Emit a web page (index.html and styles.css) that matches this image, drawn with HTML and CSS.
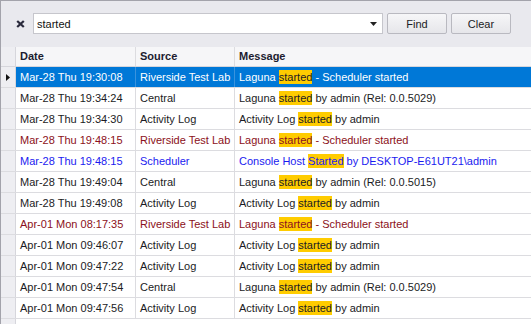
FILE: index.html
```html
<!DOCTYPE html>
<html>
<head>
<meta charset="utf-8">
<link rel="stylesheet" href="styles.css">
</head>
<body>
<div class="app">
  <div class="toolbar">
    <span class="clear-x">
      <svg width="9" height="8" viewBox="0 0 9 8"><path d="M1.2 1 L7.8 7 M7.8 1 L1.2 7" stroke="#2a2a3c" stroke-width="2.3" stroke-linecap="butt"/></svg>
    </span>
    <div class="search">
      <span class="search-text">started</span>
      <svg class="drop" width="7" height="4" viewBox="0 0 7 4"><path d="M0 0 H7 L3.5 4 Z" fill="#222"/></svg>
    </div>
    <button class="btn">Find</button>
    <button class="btn">Clear</button>
  </div>
  <div class="grid">
    <div class="row head">
      <div class="ind"></div>
      <div class="cell c-date">Date</div>
      <div class="cell c-src">Source</div>
      <div class="cell c-msg">Message</div>
    </div>
    <div class="row sel">
      <div class="ind"><svg width="4" height="7" viewBox="0 0 4 7"><path d="M0 0 L4 3.5 L0 7 Z" fill="#111"/></svg></div>
      <div class="cell c-date">Mar-28 Thu 19:30:08</div>
      <div class="cell c-src">Riverside Test Lab</div>
      <div class="cell c-msg">Laguna <span class="hl">started</span> - Scheduler started</div>
    </div>
    <div class="row">
      <div class="ind"></div>
      <div class="cell c-date">Mar-28 Thu 19:34:24</div>
      <div class="cell c-src">Central</div>
      <div class="cell c-msg">Laguna <span class="hl">started</span> by admin (Rel: 0.0.5029)</div>
    </div>
    <div class="row">
      <div class="ind"></div>
      <div class="cell c-date">Mar-28 Thu 19:34:30</div>
      <div class="cell c-src">Activity Log</div>
      <div class="cell c-msg">Activity Log <span class="hl">started</span> by admin</div>
    </div>
    <div class="row red">
      <div class="ind"></div>
      <div class="cell c-date">Mar-28 Thu 19:48:15</div>
      <div class="cell c-src">Riverside Test Lab</div>
      <div class="cell c-msg">Laguna <span class="hl">started</span> - Scheduler started</div>
    </div>
    <div class="row blue">
      <div class="ind"></div>
      <div class="cell c-date">Mar-28 Thu 19:48:15</div>
      <div class="cell c-src">Scheduler</div>
      <div class="cell c-msg">Console Host <span class="hl">Started</span> by DESKTOP-E61UT21\admin</div>
    </div>
    <div class="row">
      <div class="ind"></div>
      <div class="cell c-date">Mar-28 Thu 19:49:04</div>
      <div class="cell c-src">Central</div>
      <div class="cell c-msg">Laguna <span class="hl">started</span> by admin (Rel: 0.0.5015)</div>
    </div>
    <div class="row">
      <div class="ind"></div>
      <div class="cell c-date">Mar-28 Thu 19:49:08</div>
      <div class="cell c-src">Activity Log</div>
      <div class="cell c-msg">Activity Log <span class="hl">started</span> by admin</div>
    </div>
    <div class="row red">
      <div class="ind"></div>
      <div class="cell c-date">Apr-01 Mon 08:17:35</div>
      <div class="cell c-src">Riverside Test Lab</div>
      <div class="cell c-msg">Laguna <span class="hl">started</span> - Scheduler started</div>
    </div>
    <div class="row">
      <div class="ind"></div>
      <div class="cell c-date">Apr-01 Mon 09:46:07</div>
      <div class="cell c-src">Activity Log</div>
      <div class="cell c-msg">Activity Log <span class="hl">started</span> by admin</div>
    </div>
    <div class="row">
      <div class="ind"></div>
      <div class="cell c-date">Apr-01 Mon 09:47:22</div>
      <div class="cell c-src">Activity Log</div>
      <div class="cell c-msg">Activity Log <span class="hl">started</span> by admin</div>
    </div>
    <div class="row">
      <div class="ind"></div>
      <div class="cell c-date">Apr-01 Mon 09:47:54</div>
      <div class="cell c-src">Central</div>
      <div class="cell c-msg">Laguna <span class="hl">started</span> by admin (Rel: 0.0.5029)</div>
    </div>
    <div class="row">
      <div class="ind"></div>
      <div class="cell c-date">Apr-01 Mon 09:47:56</div>
      <div class="cell c-src">Activity Log</div>
      <div class="cell c-msg">Activity Log <span class="hl">started</span> by admin</div>
    </div>
    <div class="filler"><div class="ind"></div></div>
  </div>
</div>
</body>
</html>
```

FILE: styles.css
```css
* { box-sizing: border-box; }
html, body { margin: 0; padding: 0; background: #ffffff; }
body {
  font-family: "Liberation Sans", Arial, sans-serif;
  font-size: 11px;
  color: #1b1b24;
}
.app {
  width: 531px;
  height: 324px;
  border-top: 1px solid #a3a3ab;
  border-left: 1px solid #a3a3ab;
  display: flex;
  flex-direction: column;
  overflow: hidden;
}
.toolbar {
  height: 46px;
  background: #e9e9ee;
  display: flex;
  align-items: flex-start;
  padding-top: 12px;
  flex: none;
}
.clear-x {
  width: 32px;
  height: 21px;
  display: flex;
  align-items: center;
  justify-content: flex-end;
  padding-right: 8px;
  padding-top: 1px;
}
.clear-x svg { display: block; }
.search {
  width: 350px;
  height: 21px;
  background: #fff;
  border: 1px solid #c6c6cc;
  display: flex;
  align-items: center;
  padding-left: 3px;
  padding-right: 5px;
}
.search-text { flex: 1; color: #111; font-size: 11px; }
.drop { display: block; }
.btn {
  width: 60px;
  height: 21px;
  margin-left: 4px;
  font-family: "Liberation Sans", Arial, sans-serif;
  font-size: 11px;
  color: #1b1b24;
  border: 1px solid #b9b9c0;
  border-radius: 2px;
  background: linear-gradient(#f6f6f8, #e6e6ea);
  padding: 0;
}
.grid {
  flex: 1;
  display: flex;
  flex-direction: column;
  background: #fff;
}
.row {
  display: flex;
  height: 21px;
  flex: none;
  border-bottom: 1px solid #dcdce0;
}
.row.head {
  height: 20px;
  background: #f6f6f8;
  font-weight: bold;
  color: #1c1c30;
  border-bottom: 1px solid #d6d6dc;
}
.row.head .cell { line-height: 19px; }
.ind {
  width: 15px;
  flex: none;
  background: #eeeef2;
  border-right: 1px solid #d6d6dc;
  display: flex;
  align-items: center;
  justify-content: center;
  padding-right: 1px;
}
.ind svg { display: block; }
.cell {
  padding-left: 4px;
  line-height: 20px;
  white-space: nowrap;
  overflow: hidden;
  border-right: 1px solid #dcdce0;
}
.c-date { width: 120px; flex: none; }
.c-src { width: 99px; flex: none; }
.c-msg { flex: 1; border-right: none; }
.hl { background: #ffcc00; color: #1b1b24; padding: 1px 0; }
.row.sel .cell { background: #0078d7; color: #fff; border-right-color: #0078d7; }
.row.sel .c-date { border-right-color: #3a93dd; }
.row.sel .c-src { border-right-color: #3a93dd; }
.row.sel .hl { color: #1b1b24; }
.row.red .cell { color: #8b1020; }
.row.red .hl { color: #8b1020; }
.row.blue .cell { color: #1a1af0; }
.row.blue .hl { color: #1a1af0; }
.filler { flex: 1; display: flex; }
.filler .ind { border-right: 1px solid #d6d6dc; }
```
